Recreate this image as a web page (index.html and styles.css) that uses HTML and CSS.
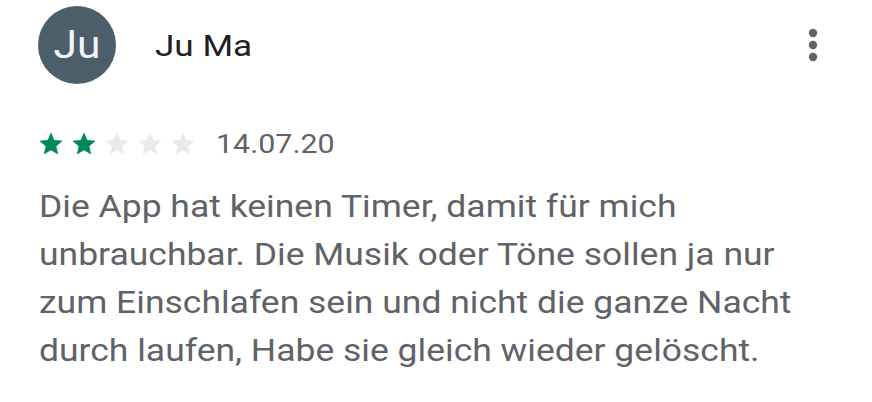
FILE: index.html
```html
<!DOCTYPE html>
<html lang="de">
<head>
<meta charset="utf-8">
<title>Rezension</title>
<link rel="stylesheet" href="styles.css">
</head>
<body>
<article class="review">
  <header class="review-head">
    <div class="avatar"><span class="avatar-initials">Ju</span></div>
    <div class="author"><span class="wide">Ju Ma</span></div>
    <button class="more" aria-label="Weitere Optionen">
      <svg width="12" height="34" viewBox="0 0 12 34">
        <circle cx="6" cy="5" r="4.2" fill="#5f6368"/>
        <circle cx="6" cy="17" r="4.2" fill="#5f6368"/>
        <circle cx="6" cy="29" r="4.2" fill="#5f6368"/>
      </svg>
    </button>
  </header>
  <div class="meta">
    <div class="stars">
      <svg class="star on" viewBox="0 0 24 24"><path d="M12 17.27L18.18 21l-1.64-7.03L22 9.24l-7.19-.61L12 2 9.19 8.63 2 9.24l5.46 4.73L5.82 21z"/></svg>
      <svg class="star on" viewBox="0 0 24 24"><path d="M12 17.27L18.18 21l-1.64-7.03L22 9.24l-7.19-.61L12 2 9.19 8.63 2 9.24l5.46 4.73L5.82 21z"/></svg>
      <svg class="star" viewBox="0 0 24 24"><path d="M12 17.27L18.18 21l-1.64-7.03L22 9.24l-7.19-.61L12 2 9.19 8.63 2 9.24l5.46 4.73L5.82 21z"/></svg>
      <svg class="star" viewBox="0 0 24 24"><path d="M12 17.27L18.18 21l-1.64-7.03L22 9.24l-7.19-.61L12 2 9.19 8.63 2 9.24l5.46 4.73L5.82 21z"/></svg>
      <svg class="star" viewBox="0 0 24 24"><path d="M12 17.27L18.18 21l-1.64-7.03L22 9.24l-7.19-.61L12 2 9.19 8.63 2 9.24l5.46 4.73L5.82 21z"/></svg>
    </div>
    <span class="date wide">14.07.20</span>
  </div>
  <p class="text">Die App hat keinen Timer, damit für mich unbrauchbar. Die Musik oder Töne sollen ja nur zum Einschlafen sein und nicht die ganze Nacht durch laufen, Habe sie gleich wieder gelöscht.</p>
</article>
</body>
</html>
```
FILE: styles.css
```css
html, body {
  margin: 0;
  padding: 0;
  background: #ffffff;
}

body {
  font-family: Roboto, "Liberation Sans", Arial, sans-serif;
  width: 872px;
  height: 402px;
  overflow: hidden;
}

/* The app renders its type slightly wide */
.wide {
  display: inline-block;
  transform: scaleX(1.17);
  transform-origin: left center;
}

.review {
  padding: 6px 0 0 38px;
}

.review-head {
  display: flex;
  align-items: center;
  height: 78px;
}

.avatar {
  width: 78px;
  height: 78px;
  border-radius: 50%;
  background: #4b5f6b;
  color: #f1f3f4;
  font-size: 38px;
  display: flex;
  align-items: center;
  justify-content: center;
  flex: none;
}

.avatar-initials {
  display: inline-block;
  transform: scaleX(1.12);
}

.author {
  margin-left: 39px;
  font-size: 30px;
  color: #202124;
  flex: 1;
}

.more {
  border: 0;
  background: none;
  padding: 0;
  margin-right: 53px;
  display: flex;
}

.meta {
  display: flex;
  align-items: center;
  margin-top: 45px;
  height: 30px;
}

.stars {
  display: flex;
  gap: 5px;
  margin-left: -1px;
}

.star {
  width: 28px;
  height: 28px;
  fill: #e8eaed;
}

.star.on {
  fill: #01875f;
}

.date {
  margin-left: 19px;
  font-size: 26px;
  color: #5f6368;
}

.text {
  margin: 24px 0 0 1px;
  width: 700px;
  font-size: 31px;
  line-height: 48px;
  color: #5f6368;
  transform: scaleX(1.145);
  transform-origin: left top;
}
```
